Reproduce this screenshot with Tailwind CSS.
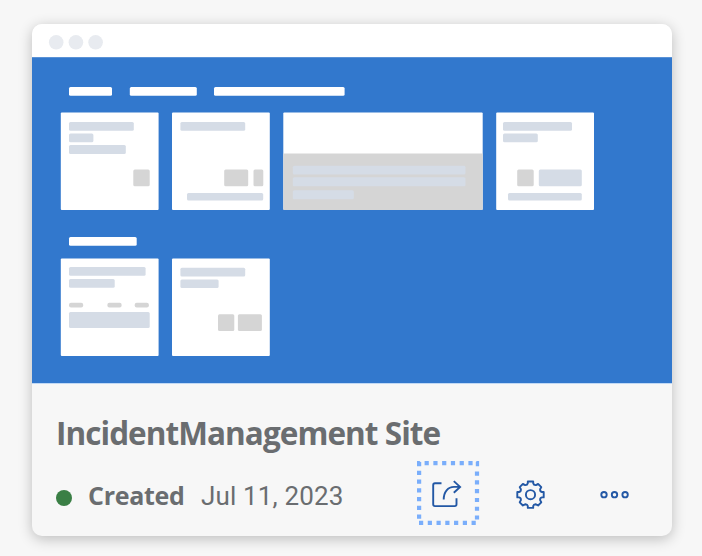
<!DOCTYPE html>
<html lang="en">
<head>
<meta charset="utf-8">
<title>IncidentManagement Site</title>
<script src="https://cdn.jsdelivr.net/npm/@tailwindcss/browser@4"></script>
</head>
<body class="bg-[#f7f7f7] w-[702px] h-[556px] overflow-hidden pt-6 pl-8">
<article class="w-[640px] h-[512px] rounded-[10px] overflow-hidden bg-[#f7f7f7] shadow-[0_3px_14px_rgba(0,0,0,0.24)] flex flex-col">
  <!-- Site preview -->
  <svg class="block shrink-0" width="640" height="359" viewBox="32 24 640 359">
    <rect x="32" y="24" width="640" height="34" fill="#fff"/>
    <g fill="#e8ebf0"><circle cx="56.2" cy="42.3" r="7.3"/><circle cx="75.9" cy="42.3" r="7.3"/><circle cx="95.6" cy="42.3" r="7.3"/></g>
    <rect x="32" y="57.2" width="640" height="326" fill="#3278cd"/>
    <g fill="#fff">
      <rect x="69" y="87" width="43" height="8.7" rx="1.5"/>
      <rect x="129.8" y="87" width="67" height="8.7" rx="1.5"/>
      <rect x="214" y="87" width="130.6" height="8.7" rx="1.5"/>
      <rect x="60.8" y="112.4" width="97.8" height="97.6" rx="1"/>
      <rect x="172" y="112.4" width="97.8" height="97.6" rx="1"/>
      <rect x="283.3" y="112.4" width="199.4" height="97.6" rx="1"/>
      <rect x="496.2" y="112.4" width="97.8" height="97.6" rx="1"/>
      <rect x="69" y="237" width="67.7" height="8.7" rx="1.5"/>
      <rect x="60.8" y="258.4" width="97.8" height="97.6" rx="1"/>
      <rect x="172" y="258.4" width="97.8" height="97.6" rx="1"/>
    </g>
    <g fill="#d5d5d5">
      <path d="M283.3 153.5h199.4V209a1 1 0 0 1-1 1H284.3a1 1 0 0 1-1-1z"/>
      <rect x="133.3" y="169.5" width="16.4" height="16.7" rx="1.5"/>
      <rect x="224.2" y="169.5" width="24" height="16.7" rx="1.5"/>
      <rect x="253.5" y="169.5" width="9.8" height="16.7" rx="1.5"/>
      <rect x="517.2" y="169.5" width="16.5" height="16.7" rx="1.5"/>
      <rect x="69" y="302.8" width="14.2" height="4.6" rx="2"/>
      <rect x="107.4" y="302.8" width="14.2" height="4.6" rx="2"/>
      <rect x="134.7" y="302.8" width="14.2" height="4.6" rx="2"/>
      <rect x="218" y="314.3" width="16.3" height="16.7" rx="1.5"/>
      <rect x="237.9" y="314.3" width="24" height="16.7" rx="1.5"/>
    </g>
    <g fill="#d5dce6">
      <rect x="69" y="121.9" width="64.8" height="8.8" rx="1.5"/>
      <rect x="69" y="133.4" width="24.4" height="8.8" rx="1.5"/>
      <rect x="69" y="145.1" width="56.8" height="8.8" rx="1.5"/>
      <rect x="180.4" y="121.9" width="64.8" height="8.8" rx="1.5"/>
      <rect x="187" y="193" width="76.2" height="7.6" rx="1.5"/>
      <rect x="292.8" y="165.7" width="172.7" height="8.9" rx="1.5"/>
      <rect x="292.8" y="177.3" width="172.7" height="8.9" rx="1.5"/>
      <rect x="292.8" y="190.3" width="61" height="8.9" rx="1.5"/>
      <rect x="503" y="121.9" width="69" height="8.8" rx="1.5"/>
      <rect x="503" y="133.4" width="34.8" height="8.8" rx="1.5"/>
      <rect x="538.8" y="169.5" width="43" height="16.7" rx="1.5"/>
      <rect x="508" y="193" width="73.8" height="7.6" rx="1.5"/>
      <rect x="69" y="267" width="76.6" height="8.8" rx="1.5"/>
      <rect x="69" y="279" width="45.7" height="8.8" rx="1.5"/>
      <rect x="69" y="312" width="80.7" height="16" rx="1.5"/>
      <rect x="180.4" y="267.7" width="64.8" height="8.8" rx="1.5"/>
      <rect x="180.4" y="279.6" width="38.2" height="8.5" rx="1.5"/>
    </g>
  </svg>
  <div class="h-[153px] border-t border-[#c1d9f5] pt-7 px-6 text-[#6a6d70] font-['Open_Sans','Noto_Sans',sans-serif]">
    <h2 class="h-[42px] leading-[42px] text-[31.5px] font-bold tracking-[-0.95px] whitespace-nowrap">IncidentManagement Site</h2>
    <div class="flex h-[76px]">
      <div class="flex items-center h-[82px] w-[361px] shrink-0 whitespace-nowrap leading-[34px] text-[25px]">
        <span class="w-4 h-4 rounded-full bg-[#3a7f45] mt-1.5 mr-4 shrink-0"></span>
        <span class="font-bold w-[113px] shrink-0 tracking-[-0.3px]">Created</span>
        <span class="font-[Roboto,sans-serif] text-[26px] tracking-[0.15px] pt-0.5">Jul 11, 2023</span>
      </div>
      <svg class="shrink-0 mt-[5px]" width="223" height="72" viewBox="417 459 223 72" fill="none" stroke="#2358a5" stroke-width="1.9">
        <g stroke="#7aaefb" stroke-width="4.2" stroke-dasharray="4.2 4.56">
          <path d="M424.6 463.1H473"/>
          <path d="M419.1 470.7V519"/>
          <path d="M477 471.6V521"/>
          <path d="M419 522.9H476"/>
        </g>
        <path fill="#7aaefb" stroke="none" d="M417 461h2.5l1 1h.7v4.3H417zM479.1 461h-2.3l-1 1v4.3h3.3z"/>
        <path d="M441.5 483.3H435Q433.2 483.3 433.2 485.1V504.3Q433.2 506.1 435 506.1H454.7Q456.5 506.1 456.5 504.3V498.3M443.7 499.5C443.7 491.7 448 486.9 454 486.9H460M453.8 481.1L460.1 486.9L453.8 492.8"/>
        <path transform="translate(530.5 494.7)" stroke-linejoin="round" d="M-2.7-13.2H2.7V-11.4Q3.2-9.4 5.4-9.6L7.6-10.8L10.8-7.6L9.6-5.4Q9.4-3.2 11.4-2.7H13.2V2.7H11.4Q9.4 3.2 9.6 5.4L10.8 7.6L7.6 10.8L5.4 9.6Q3.2 9.4 2.7 11.4V13.2H-2.7V11.4Q-3.2 9.4-5.4 9.6L-7.6 10.8L-10.8 7.6L-9.6 5.4Q-9.4 3.2-11.4 2.7H-13.2V-2.7H-11.4Q-9.4-3.2-9.6-5.4L-10.8-7.6L-7.6-10.8L-5.4-9.6Q-3.2-9.4-2.7-11.4Z"/>
        <circle cx="530.5" cy="494.7" r="4.6"/>
        <circle cx="604" cy="494.7" r="2.7"/><circle cx="614.5" cy="494.7" r="2.7"/><circle cx="625.1" cy="494.7" r="2.7"/>
      </svg>
    </div>
  </div>
</article>
</body>
</html>
